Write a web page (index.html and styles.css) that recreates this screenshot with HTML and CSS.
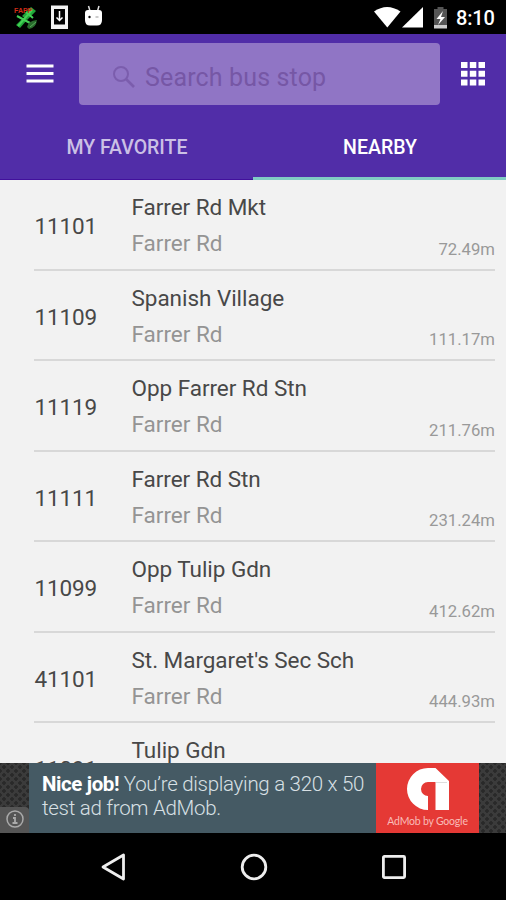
FILE: index.html
```html
<!DOCTYPE html>
<html lang="en">
<head>
<meta charset="utf-8">
<title>Nearby bus stops</title>
<link rel="stylesheet" href="styles.css">
</head>
<body>
<div class="phone">
  <header class="status">
    <svg class="status-left" width="110" height="34" viewBox="0 0 110 34">
      <path d="M16 25l7-7 4 2-7 8zM22 16l9-9 5 4-9 9z" fill="#20a638"/>
      <path d="M17 16l13 7M26 12l7 6M18 26l14-16" stroke="#43cf55" stroke-width="2"/>
      <path d="M27 27q1-6 10-7-1 8-8 9z" fill="#286b2c"/>
      <path d="M30 27l6-5" stroke="#59a95b"/>
      <text x="14" y="13" class="tiny-red">FAPP</text>
      <path fill-rule="evenodd" d="M51 5.500h17v23.500h-17zM54 9v15.500h11V9z" fill="#f2f2f2"/>
      <path d="M59.500 11v9M56.500 17.500l3 3 3-3" fill="none" stroke="#fff" stroke-width="1.500"/>
      <path d="M88.500 6l1.500 5M99 6l-1.500 5" stroke="#ddd" stroke-width="1.500"/>
      <path d="M85 13q0-3 3-3h11q3 0 3 3v7q0 5.500-5 5.500h-7q-5 0-5-5.500z" fill="#fff"/>
      <circle cx="89.500" cy="17" r="1.200" fill="#111"/><path d="M95.500 17h3" stroke="#999"/>
    </svg>
    <div class="status-right">
      <svg width="78" height="34" viewBox="0 0 78 34">
        <path d="M0 11.500Q13 2.500 26.500 11.500L13.300 27.500z" fill="#fff"/>
        <path d="M49 7v20.500H28z" fill="#fff"/>
        <path d="M60 9h3.500V7h6v2H73v19H60z" fill="#555"/>
        <path d="M60 25h13v3.500H60z" fill="#ccc"/>
        <path d="M69 11l-6.500 8h4l-2.500 6 7-8h-4z" fill="#fff"/>
      </svg>
      <span class="clock">8:10</span>
    </div>
  </header>
  <div class="toolbar">
    <svg class="menu" width="28" height="24" viewBox="0 0 28 24"><path d="M.500 4h27M.500 11.500h27M.500 19h27" stroke="#fff" stroke-width="3.200"/></svg>
    <div class="search">
      <svg width="24" height="24" viewBox="0 0 24 24"><circle cx="9" cy="9" r="7" fill="none" stroke="#7b5dad" stroke-width="2"/><path d="M14 14l8 8" stroke="#7b5dad" stroke-width="2.600"/></svg>
      <span class="search-text">Search bus stop</span>
    </div>
    <svg class="apps" width="24" height="24" viewBox="0 0 24 24"><path fill="#fff" d="M0 0h6.500v6H0zM8.800 0h6.500v6H8.800zM17.500 0H24v6h-6.500zM0 8.700h6.500v6H0zM8.800 8.700h6.500v6H8.800zM17.500 8.700H24v6h-6.500zM0 17.400h6.500v6H0zM8.800 17.400h6.500v6H8.800zM17.500 17.400H24v6h-6.500z"/></svg>
  </div>
  <nav class="tabs">
    <div class="tab"><span>MY FAVORITE</span></div>
    <div class="tab active"><span>NEARBY</span></div>
  </nav>
  <main class="list">
    <div class="row"><span class="code">11101</span><div class="stop"><div class="name">Farrer Rd Mkt</div><div class="road">Farrer Rd</div></div><span class="distance">72.49m</span></div>
    <div class="row"><span class="code">11109</span><div class="stop"><div class="name">Spanish Village</div><div class="road">Farrer Rd</div></div><span class="distance">111.17m</span></div>
    <div class="row"><span class="code">11119</span><div class="stop"><div class="name">Opp Farrer Rd Stn</div><div class="road">Farrer Rd</div></div><span class="distance">211.76m</span></div>
    <div class="row"><span class="code">11111</span><div class="stop"><div class="name">Farrer Rd Stn</div><div class="road">Farrer Rd</div></div><span class="distance">231.24m</span></div>
    <div class="row"><span class="code">11099</span><div class="stop"><div class="name">Opp Tulip Gdn</div><div class="road">Farrer Rd</div></div><span class="distance">412.62m</span></div>
    <div class="row"><span class="code">41101</span><div class="stop"><div class="name">St. Margaret's Sec Sch</div><div class="road">Farrer Rd</div></div><span class="distance">444.93m</span></div>
    <div class="row"><span class="code">11091</span><div class="stop"><div class="name">Tulip Gdn</div></div></div>
  </main>
  <aside class="ad">
    <div class="ad-side"><div class="info"><svg width="20" height="20" viewBox="0 0 20 20"><circle cx="10" cy="10" r="8" fill="none" stroke="#aaa" stroke-width="1.500"/><path d="M10 5v2M8 9h2v5M7.500 14h5" fill="none" stroke="#aaa" stroke-width="1.800"/></svg></div></div>
    <div class="ad-copy"><div class="ad-line"><b>Nice job!</b> You’re displaying a 320 x 50</div><div class="ad-line second">test ad from AdMob.</div></div>
    <div class="ad-brand">
      <svg width="44" height="44" viewBox="0 0 44 44"><path d="M22 43A21 21 0 0 1 22 1H29.500L43 14V43H29.500V15H22A7 7 0 0 0 22 29z" fill="#fff"/><path d="M30 15.500h11" stroke="#ddd"/></svg>
      <div class="ad-label">AdMob by <b>Google</b></div>
    </div>
    <div class="ad-end"></div>
  </aside>
  <footer class="navbar">
    <svg width="26" height="30" viewBox="0 0 26 30"><path d="M23.500 3v24L3 15z" fill="none" stroke="#eee" stroke-width="2.800" stroke-linejoin="round"/></svg>
    <svg width="30" height="30" viewBox="0 0 30 30"><circle cx="15" cy="15" r="11.800" fill="none" stroke="#eee" stroke-width="2.800"/></svg>
    <svg width="26" height="26" viewBox="0 0 26 26"><rect x="2.400" y="2.400" width="21.200" height="21.200" rx="1" fill="none" stroke="#eee" stroke-width="2.800"/></svg>
  </footer>
</div>
</body>
</html>
```
FILE: styles.css
```css
* { box-sizing: border-box; }
body { margin: 0; font-family: Roboto, "Liberation Sans", sans-serif; }
svg { display: block; flex: none; }
.phone { width: 506px; height: 900px; display: flex; flex-direction: column; overflow: hidden; background: #f2f2f2; }
.status { height: 34px; flex: none; display: flex; justify-content: space-between; background: #000; color: #fff; }
.status-right { display: flex; gap: 4px; padding-right: 11px; }
.clock { font-size: 20px; font-weight: 500; line-height: 36px; width: 39px; white-space: nowrap; letter-spacing: -.2px; }
.tiny-red { font: bold 7px "Liberation Sans", sans-serif; fill: #d02c16; }
.toolbar { height: 82px; flex: none; display: flex; align-items: flex-start; background: #512da8; padding: 9px 21px 0 26px; }
.menu { margin-top: 19px; }
.search { width: 361px; height: 62px; margin-left: 25px; background: #9075c5; border-radius: 4px; display: flex; align-items: center; padding: 6px 0 0 33px; gap: 9px; color: #7657a5; font-size: 25px; }
.search-text { letter-spacing: .15px; white-space: nowrap; }
.apps { margin: 19px 0 0 21px; }
.tabs { height: 64px; flex: none; display: flex; background: #512da8; }
.tab { width: 253px; display: flex; justify-content: center; align-items: center; font-size: 19.500px; font-weight: 500; color: #cbc0e5; border-bottom: 1px solid #42109c; }
.active { color: #fff; border-bottom: 3px solid #80cbc4; padding-top: 2px; }
.tab span { padding-left: 1px; }
.list { height: 583px; flex: none; overflow: hidden; padding: 0 11px 0 34px; }
.row { height: 90.500px; display: flex; border-bottom: 2px solid #d8d8d8; color: #484848; }
.code { width: 97.500px; font-size: 22.500px; line-height: 26px; padding: 33px 0 0 .5px; letter-spacing: -.15px; }
.stop { flex: 1; padding-top: 14.400px; font-size: 22.500px; line-height: 26px; white-space: nowrap; }
.name { letter-spacing: -.04px; }
.road { margin-top: 10px; color: #949494; }
.distance { align-self: flex-end; font-size: 16.700px; line-height: 20px; padding-bottom: 9px; color: #999; }
.ad { height: 70px; flex: none; display: flex; background: #455a64; }
.ad-side, .ad-end { background-color: #3b3b3b; background-image: radial-gradient(circle, #292929 1.500px, transparent 2px), radial-gradient(circle, #292929 1.500px, transparent 2px); background-size: 8px 8px; background-position: 0 0, 4px 4px; }
.ad-side { width: 29px; display: flex; align-items: flex-end; }
.info { width: 29px; height: 26px; padding: 2px 0 0 5px; background: #555; border-top-right-radius: 4px; }
.ad-copy { width: 347px; padding: 9px 0 0 13px; color: #d8e0e4; font-size: 20.500px; font-weight: 300; line-height: 24px; letter-spacing: -.29px; white-space: nowrap; }
.ad-copy b { color: #fff; font-weight: 700; letter-spacing: -.4px; }
.ad-brand { width: 103px; background: #e53935; display: flex; flex-direction: column; align-items: center; padding-top: 4px; }
.ad-label { font-family: Lato, sans-serif; font-size: 10.500px; letter-spacing: -.2px; line-height: 16px; color: #f9bcb8; margin-top: 2px; white-space: nowrap; }
.ad-label b { font-weight: 400; }
.ad-end { flex: 1; }
.navbar { height: 67px; flex: none; background: #000; display: flex; align-items: center; justify-content: space-between; padding: 0 99px 0 100px; }
```
